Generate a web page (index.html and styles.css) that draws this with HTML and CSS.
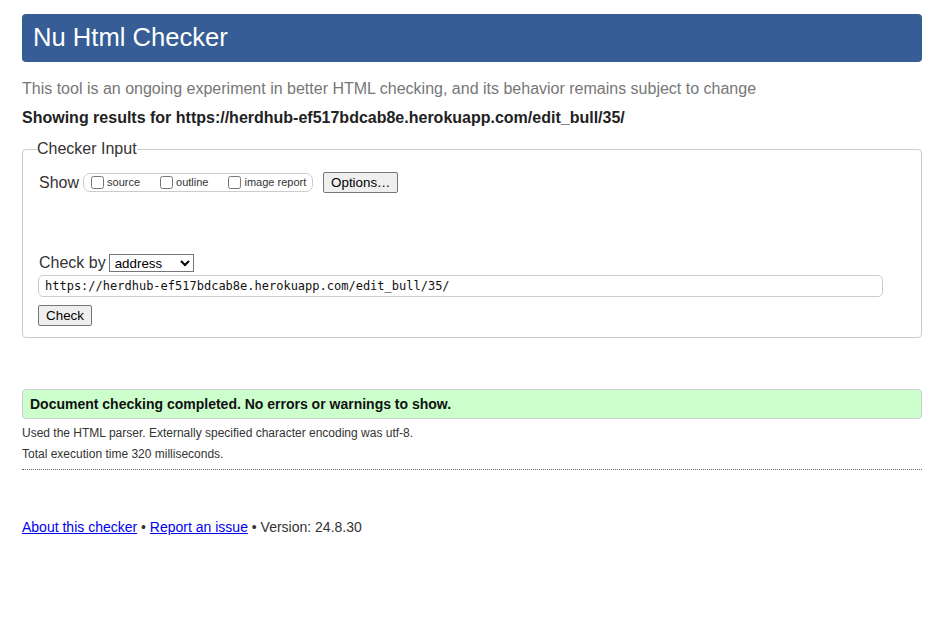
FILE: index.html
```html
<!DOCTYPE html>
<html lang="en">
<head>
<meta charset="utf-8">
<title>Showing results for https://herdhub-ef517bdcab8e.herokuapp.com/edit_bull/35/ - Nu Html Checker</title>
<link rel="stylesheet" href="styles.css">
</head>
<body>
<div class="page">
  <h1 class="title">Nu Html Checker</h1>
  <p class="intro">This tool is an ongoing experiment in better HTML checking, and its behavior remains subject to change</p>
  <p class="showing">Showing results for https://herdhub-ef517bdcab8e.herokuapp.com/edit_bull/35/</p>

  <fieldset class="checker">
    <legend class="legend">Checker Input</legend>
    <div class="show-row">
      <span class="row-label">Show</span>
      <div class="show-group">
        <label class="opt"><input type="checkbox">source</label>
        <label class="opt"><input type="checkbox">outline</label>
        <label class="opt"><input type="checkbox">image report</label>
      </div>
      <button class="btn options" type="button">Options…</button>
    </div>
    <div class="checkby-row">
      <span class="row-label">Check by</span>
      <select class="by-select"><option>address</option></select>
    </div>
    <input class="url-input" type="url" value="https://herdhub-ef517bdcab8e.herokuapp.com/edit_bull/35/">
    <div class="submit-row"><button class="btn check" type="button">Check</button></div>
  </fieldset>

  <p class="success">Document checking completed. No errors or warnings to show.</p>
  <p class="details">Used the HTML parser. Externally specified character encoding was utf-8.</p>
  <p class="details">Total execution time 320 milliseconds.</p>
  <hr class="rule">
  <p class="footer"><a href="#about">About this checker</a> • <a href="#issue">Report an issue</a> • Version: 24.8.30</p>
</div>
</body>
</html>
```

FILE: styles.css
```css
html, body {
  margin: 0;
  padding: 0;
  background: #fff;
}
body {
  font-family: "Liberation Sans", Arial, sans-serif;
  color: #222;
}
.page {
  padding: 14px 7px 0 22px;
}
.title {
  margin: 0;
  height: 48px;
  box-sizing: border-box;
  background: #365d95;
  color: #fff;
  border-radius: 4px;
  font-size: 25.6px;
  font-weight: normal;
  line-height: 46px;
  padding: 0 0 2px 11px;
}
.intro {
  margin: 17px 0 0;
  font-size: 16px;
  line-height: 20px;
  color: #777;
}
.showing {
  margin: 9px 0 0;
  font-size: 16px;
  line-height: 20px;
  font-weight: bold;
  color: #222;
}
.checker {
  margin: 12px 0 0;
  border: 1px solid #ccc;
  border-radius: 4px;
  padding: 0 15px 11px 15px;
  min-width: 0;
}
.legend {
  padding: 0;
  margin-left: -1px;
  font-size: 16px;
  line-height: 18px;
  color: #333;
}
.row-label {
  font-size: 16px;
  color: #333;
  margin-left: 1px;
}
.show-row {
  margin-top: 14px;
  height: 21px;
  display: flex;
  align-items: center;
}
.show-group {
  margin-left: 4px;
  height: 19px;
  box-sizing: border-box;
  border: 1px solid #ccc;
  border-radius: 7px;
  padding: 0 6px 0 3px;
  display: flex;
  align-items: center;
  gap: 16px;
}
.opt {
  font-size: 11px;
  color: #333;
  display: inline-flex;
  align-items: center;
  line-height: 13px;
}
.opt input {
  margin: 0 3px 0 4px;
  width: 13px;
  height: 13px;
}
.btn {
  font-family: "Liberation Sans", Arial, sans-serif;
  font-size: 13.33px;
  color: #000;
  background: #efefef;
  border: 1px solid #767676;
  border-radius: 2px;
  height: 21px;
  padding: 0 6px;
  box-sizing: border-box;
}
.options {
  margin-left: 10px;
  width: 75px;
}
.checkby-row {
  margin-top: 61px;
  height: 18px;
  display: flex;
  align-items: center;
}
.by-select {
  margin-left: 3px;
  width: 85px;
  height: 18px;
  font-family: "Liberation Sans", Arial, sans-serif;
  font-size: 13.33px;
  border: 1px solid #767676;
  border-radius: 0;
  background: #fff;
  color: #000;
  padding: 0 0 0 1px;
}
.url-input {
  display: block;
  margin: 3px 0 0;
  width: 845px;
  height: 22px;
  box-sizing: border-box;
  border: 1px solid #ccc;
  border-radius: 5px;
  padding: 0 6px;
  font-family: "DejaVu Sans Mono", "Liberation Mono", monospace;
  font-size: 12px;
  color: #111;
  background: #fff;
}
.submit-row {
  margin-top: 8px;
  height: 21px;
  display: flex;
}
.check {
  width: 54px;
}
.success {
  margin: 51px 0 0;
  height: 30px;
  box-sizing: border-box;
  background: #ccffcc;
  border: 1px solid #ccc;
  border-radius: 4px;
  padding: 0 0 0 7px;
  font-size: 14px;
  font-weight: bold;
  line-height: 28px;
  color: #111;
}
.details {
  margin: 0;
  font-size: 12px;
  line-height: 21px;
  color: #333;
}
.success + .details {
  margin-top: 4px;
}
.rule {
  margin: 4px 0 0;
  border: 0;
  border-top: 1px dotted #666;
  height: 0;
}
.footer {
  margin: 47px 0 0;
  font-size: 14px;
  line-height: 20px;
  color: #333;
}
.footer a {
  color: #0000ee;
}
```
